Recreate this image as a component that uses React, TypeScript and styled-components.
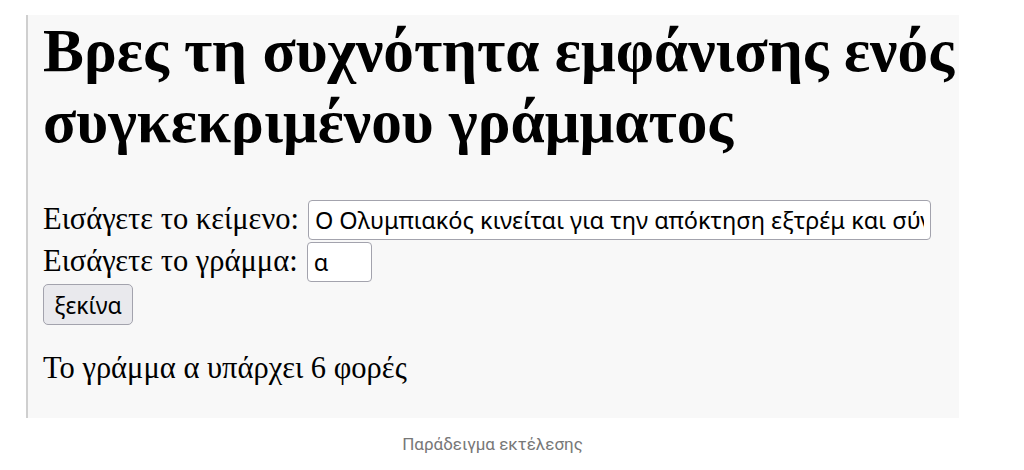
import * as React from 'react'
import styled, { createGlobalStyle } from 'styled-components'

const GlobalStyle = createGlobalStyle`
  html, body {
    margin: 0;
    padding: 0;
    background: #ffffff;
  }
`

const App: React.FC = () => (
  <>
    <GlobalStyle />
    <Figure>
      <Panel>
        <Title>Βρες τη συχνότητα εμφάνισης ενός συγκεκριμένου γράμματος</Title>
        <Form onSubmit={(e) => e.preventDefault()}>
          <Row>
            <Label htmlFor='text'>Εισάγετε το κείμενο:</Label>
            <TextField
              id='text'
              $width={623}
              defaultValue='Ο Ολυμπιακός κινείται για την απόκτηση εξτρέμ και σύντομα θα ανακοινώσει τη μεταγραφή'
            />
          </Row>
          <Row>
            <Label htmlFor='letter'>Εισάγετε το γράμμα:</Label>
            <TextField id='letter' $width={65} defaultValue='α' />
          </Row>
          <Row>
            <StartButton type='submit'>ξεκίνα</StartButton>
          </Row>
        </Form>
        <Result>Το γράμμα α υπάρχει 6 φορές</Result>
      </Panel>
      <Caption>Παράδειγμα εκτέλεσης</Caption>
    </Figure>
  </>
)

export default App

const Figure = styled.div`
  width: 933px;
  margin-left: 26px;
  padding-top: 15px;
`

const Panel = styled.div`
  background: #f8f8f8;
  border-left: 2px solid #cfcfcf;
  padding: 0 0 32px 15px;
  font-family: "Liberation Serif", "DejaVu Serif", serif;
  color: #000;
`

const Title = styled.h1`
  margin: 0 0 43px;
  font-size: 61.3px;
  font-weight: 700;
  line-height: 71px;
`

const Form = styled.form`
  display: flex;
  flex-direction: column;
  gap: 2px;
`

const Row = styled.div`
  display: flex;
  align-items: baseline;
  gap: 9px;
`

const Label = styled.label`
  font-size: 30.5px;
`

const TextField = styled.input<{ $width: number }>`
  box-sizing: border-box;
  width: ${(p) => p.$width}px;
  height: 40px;
  padding: 0 6px;
  border: 1.5px solid #a3a3ad;
  border-radius: 4px;
  background: #fff;
  font-family: "Noto Sans", "Open Sans", sans-serif;
  font-size: 23.5px;
  color: #000;
  outline: none;
`

const StartButton = styled.button`
  box-sizing: border-box;
  width: 90px;
  height: 41px;
  padding: 0 8px;
  border: 1.5px solid #a3a3ad;
  border-radius: 5px;
  background: #e9e9ed;
  font-family: "Noto Sans", "Open Sans", sans-serif;
  font-size: 23px;
  color: #000;
`

const Result = styled.p`
  margin: 26px 0 0;
  font-size: 30.5px;
  line-height: 35px;
`

const Caption = styled.div`
  margin-top: 16px;
  text-align: center;
  font-family: Roboto, "Noto Sans", sans-serif;
  font-size: 17px;
  color: #777;
`
